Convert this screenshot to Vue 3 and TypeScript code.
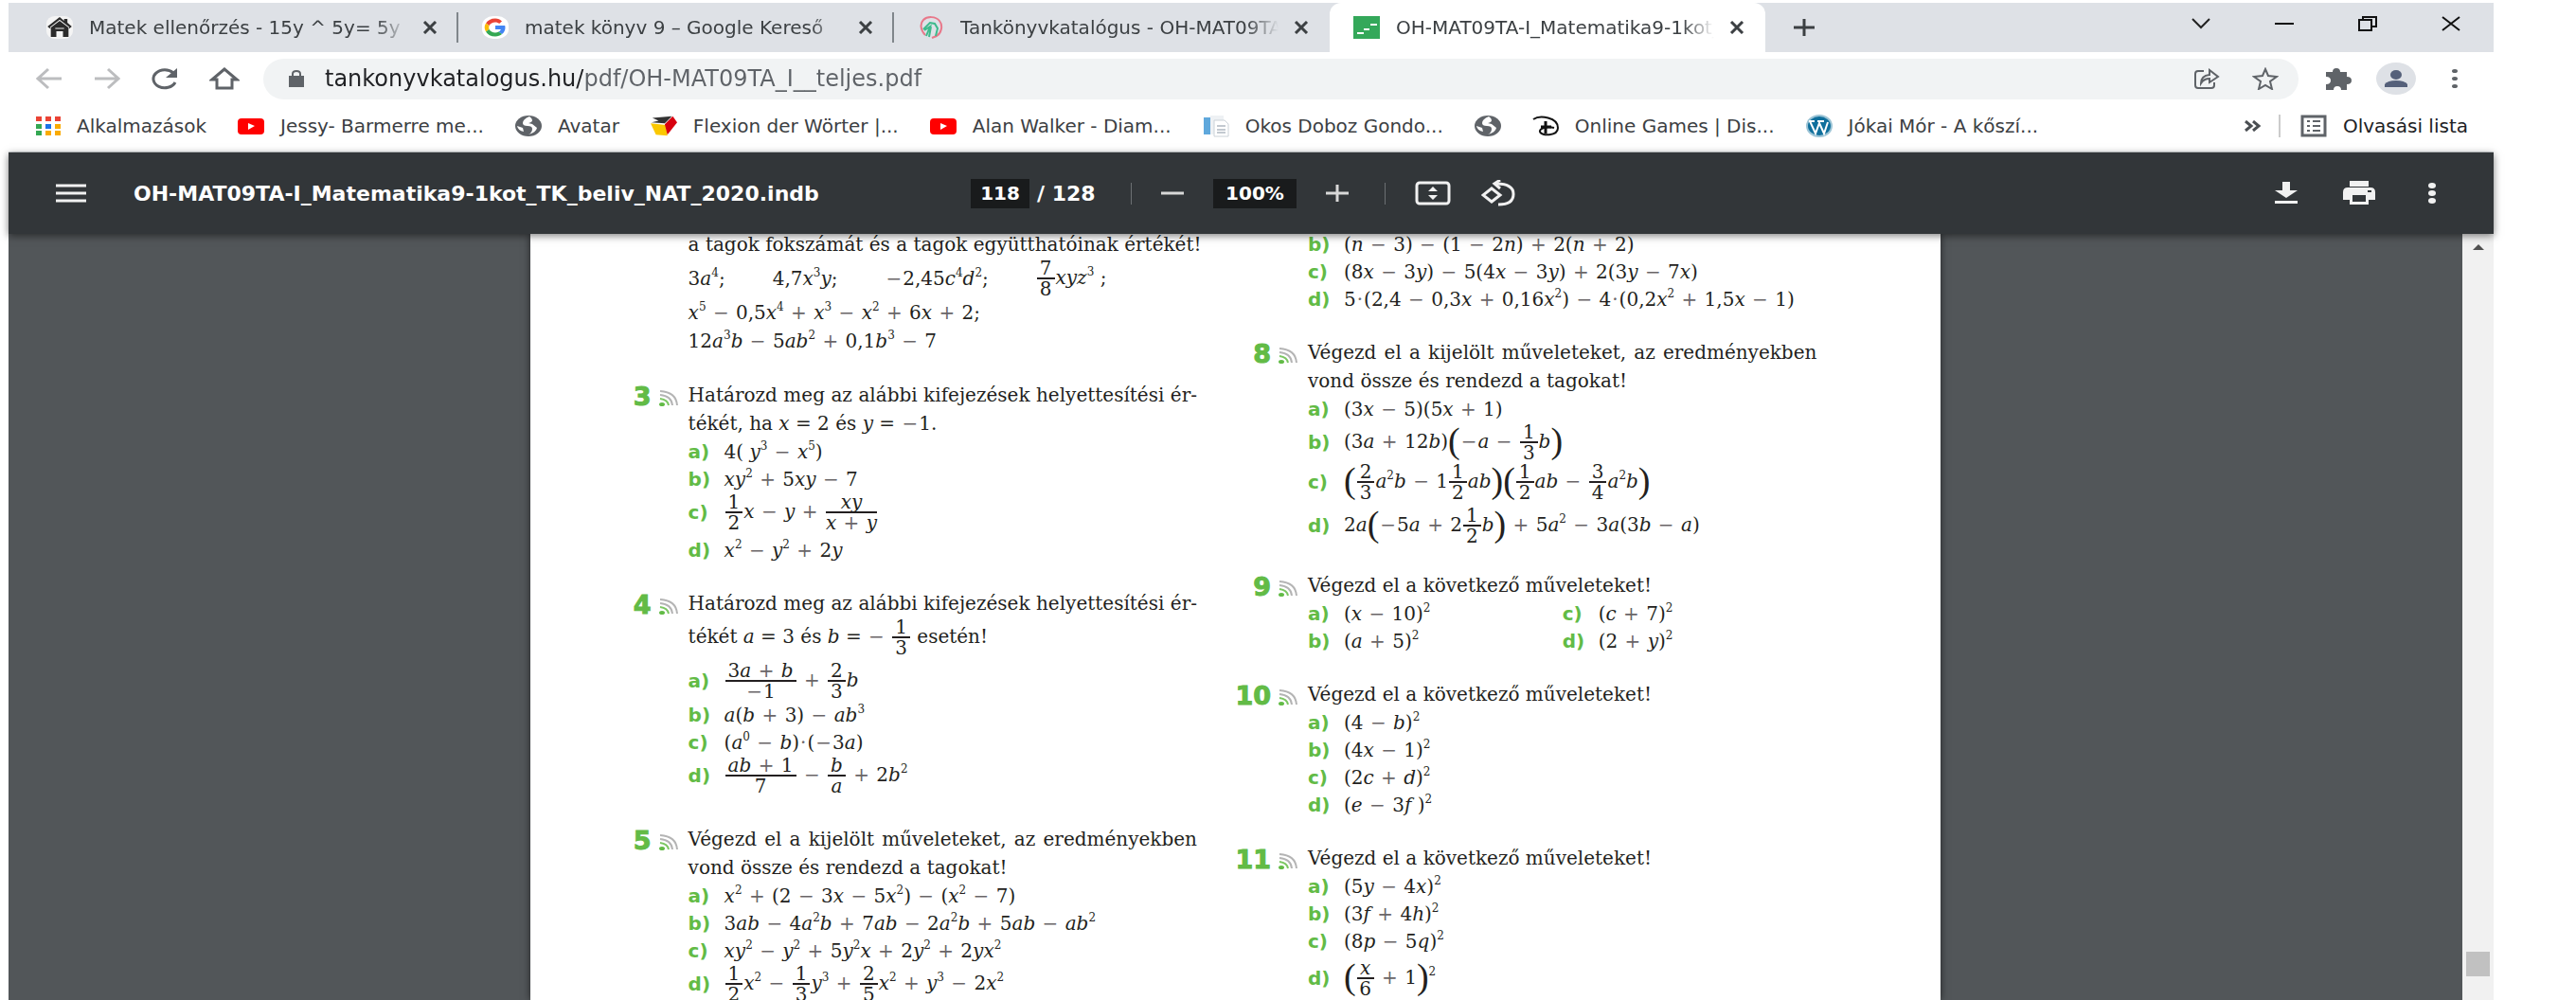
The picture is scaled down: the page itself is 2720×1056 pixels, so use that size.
<script setup lang="ts">
import { h, ref, type VNode } from 'vue'

interface Tab { icon: string; title: string; active?: boolean }
interface Bookmark { icon: string; title: string }
interface Item { label: string; math: string }
interface Row {
  text?: string
  items?: Item[]
  parts?: string[]
  justify?: boolean
  tall?: boolean
  spaced?: boolean
}
interface Exercise { no: string; rows: Row[]; spaced?: boolean }

const tabs: Tab[] = [
  { icon: 'house', title: 'Matek ellenőrzés - 15y ^ 5y= 5y (' },
  { icon: 'google', title: 'matek könyv 9 – Google Kereső' },
  { icon: 'catalog', title: 'Tankönyvkatalógus - OH-MAT09TA' },
  { icon: 'sheet', title: 'OH-MAT09TA-I_Matematika9-1kot_TK', active: true },
]

const bookmarks: Bookmark[] = [
  { icon: 'apps', title: 'Alkalmazások' },
  { icon: 'youtube', title: 'Jessy- Barmerre me...' },
  { icon: 'globe', title: 'Avatar' },
  { icon: 'flexion', title: 'Flexion der Wörter |...' },
  { icon: 'youtube', title: 'Alan Walker - Diam...' },
  { icon: 'document', title: 'Okos Doboz Gondo...' },
  { icon: 'globe', title: '' },
  { icon: 'disney', title: 'Online Games | Dis...' },
  { icon: 'wordpress', title: 'Jókai Mór - A kőszí...' },
]

const url = ref('tankonyvkatalogus.hu/pdf/OH-MAT09TA_I__teljes.pdf')
const pageNo = ref('118')
const zoom = ref('100%')

const one = (label: string, math: string, extra: Partial<Row> = {}): Row => ({
  items: [{ label, math }],
  ...extra,
})

const left: Exercise[] = [
  {
    no: '',
    rows: [
      { text: 'a tagok fokszámát és a tagok együtthatóinak értékét!' },
      { parts: ['3a^4;', '4,7x^3y;', '−2,45c^4d^2;', '{7|8}xyz^3 ;'], tall: true },
      { text: '$x^5 − 0,5x^4 + x^3 − x^2 + 6x + 2;$' },
      { text: '$12a^3b − 5ab^2 + 0,1b^3 − 7$' },
    ],
  },
  {
    no: '3',
    rows: [
      { text: 'Határozd meg az alábbi kifejezések helyettesítési ér-', justify: true },
      { text: 'tékét, ha $x = 2$ és $y = −1.$' },
      one('a)', '4( y^3 − x^5)'),
      one('b)', 'xy^2 + 5xy − 7'),
      one('c)', '{1|2}x − y + {xy|x + y}', { tall: true }),
      one('d)', 'x^2 − y^2 + 2y', { spaced: true }),
    ],
  },
  {
    no: '4',
    rows: [
      { text: 'Határozd meg az alábbi kifejezések helyettesítési ér-', justify: true },
      { text: 'tékét $a = 3$ és $b = − {1|3}$ esetén!', tall: true },
      one('a)', '{3a + b|−1} + {2|3}b', { tall: true, spaced: true }),
      one('b)', 'a(b + 3) − ab^3'),
      one('c)', '(a^0 − b)·(−3a)'),
      one('d)', '{ab + 1|7} − {b|a} + 2b^2', { tall: true }),
    ],
  },
  {
    no: '5',
    spaced: true,
    rows: [
      { text: 'Végezd el a kijelölt műveleteket, az eredményekben', justify: true },
      { text: 'vond össze és rendezd a tagokat!' },
      one('a)', 'x^2 + (2 − 3x − 5x^2) − (x^2 − 7)'),
      one('b)', '3ab − 4a^2b + 7ab − 2a^2b + 5ab − ab^2'),
      one('c)', 'xy^2 − y^2 + 5y^2x + 2y^2 + 2yx^2'),
      one('d)', '{1|2}x^2 − {1|3}y^3 + {2|5}x^2 + y^3 − 2x^2', { tall: true }),
    ],
  },
]

const right: Exercise[] = [
  {
    no: '',
    rows: [
      one('b)', '(n − 3) − (1 − 2n) + 2(n + 2)'),
      one('c)', '(8x − 3y) − 5(4x − 3y) + 2(3y − 7x)'),
      one('d)', '5·(2,4 − 0,3x + 0,16x^2) − 4·(0,2x^2 + 1,5x − 1)'),
    ],
  },
  {
    no: '8',
    rows: [
      { text: 'Végezd el a kijelölt műveleteket, az eredményekben', justify: true },
      { text: 'vond össze és rendezd a tagokat!' },
      one('a)', '(3x − 5)(5x + 1)'),
      one('b)', '(3a + 12b)[−a − {1|3}b]', { tall: true }),
      one('c)', '[{2|3}a^2b − 1{1|2}ab][{1|2}ab − {3|4}a^2b]', { tall: true }),
      one('d)', '2a[−5a + 2{1|2}b] + 5a^2 − 3a(3b − a)', { tall: true, spaced: true }),
    ],
  },
  {
    no: '9',
    rows: [
      { text: 'Végezd el a következő műveleteket!' },
      { items: [{ label: 'a)', math: '(x − 10)^2' }, { label: 'c)', math: '(c + 7)^2' }] },
      { items: [{ label: 'b)', math: '(a + 5)^2' }, { label: 'd)', math: '(2 + y)^2' }] },
    ],
  },
  {
    no: '10',
    rows: [
      { text: 'Végezd el a következő műveleteket!' },
      one('a)', '(4 − b)^2'),
      one('b)', '(4x − 1)^2'),
      one('c)', '(2c + d)^2'),
      one('d)', '(e − 3f )^2'),
    ],
  },
  {
    no: '11',
    rows: [
      { text: 'Végezd el a következő műveleteket!' },
      one('a)', '(5y − 4x)^2'),
      one('b)', '(3f + 4h)^2'),
      one('c)', '(8p − 5q)^2'),
      one('d)', '[{x|6} + 1]^2', { tall: true, spaced: true }),
    ],
  },
]

const columns = [left, right]

/* {p|q} is a fraction, ^n an exponent, [ ] are tall brackets, letters are variables */
function parseMath(src: string): VNode[] {
  const out: VNode[] = []
  const pattern = /\{([^|]*)\|([^}]*)\}|\^(\d)|([a-z]+)|([[\]])|([−+·])|([^{^a-z[\]−+·]+)/g
  for (const m of src.matchAll(pattern)) {
    if (m[1] !== undefined) {
      out.push(h('span', { class: 'm-frac' }, [
        h('span', { class: 'm-num' }, parseMath(m[1])),
        h('span', { class: 'm-den' }, parseMath(m[2])),
      ]))
    } else if (m[3]) out.push(h('sup', { class: 'm-sup' }, m[3]))
    else if (m[4]) out.push(h('i', m[4]))
    else if (m[5]) out.push(h('span', { class: 'm-tall' }, m[5] === '[' ? '(' : ')'))
    else if (m[6]) out.push(h('span', { class: 'm-op' }, m[6]))
    else out.push(h('span', m[7]))
  }
  return out
}

const MathText = (props: { src: string }) => h('span', { class: 'm' }, parseMath(props.src))
MathText.props = ['src']

const RichText = (props: { src: string }) =>
  h('span', { class: 'm' }, props.src.split('$').flatMap((s, i) => (i % 2 ? parseMath(s) : [h('span', s)])))
RichText.props = ['src']
</script>

<template>
  <div class="browser">
    <header class="chrome">
      <div class="tabstrip">
        <div v-for="(t, i) in tabs" :key="i" class="tab" :class="{ active: t.active, before: tabs[i + 1]?.active }">
          <svg v-if="t.icon === 'house'" class="fav" viewBox="0 0 24 24" preserveAspectRatio="none">
            <rect width="24" height="24" rx="8" fill="#f4f4f4" />
            <path d="M12 1 1 11l2 2 1-1v10h5v-6h6v6h5V12l1 1 2-2-4-4V3h-3v2z" fill="#2b2b2b" />
            <path d="M3.500 12 12 4.500 20.500 12M8 13h8" stroke="#f4f4f4" fill="none" />
          </svg>
          <svg v-else-if="t.icon === 'google'" class="fav" viewBox="0 0 48 48" preserveAspectRatio="none">
            <rect width="48" height="48" rx="20" fill="#fff" />
            <path fill="#EA4335" d="M24 13c3 0 5 1 7 3l5-5C33 7 29 5 24 5 16 5 10 9 7 15l6 5c2-4 6-7 11-7z" />
            <path fill="#4285F4" d="M42 24l-.5-4H24v8h10c-.5 2-2 4-4 5l6 5c4-3 6-8 6-14z" />
            <path fill="#FBBC05" d="M13 28a11 11 0 0 1 0-8l-6-5a19 19 0 0 0 0 18z" />
            <path fill="#34A853" d="M24 43c5 0 9-2 12-5l-6-5c-2 1-4 2-6 2-5 0-9-3-11-7l-6 5c3 6 9 10 17 10z" />
          </svg>
          <svg v-else-if="t.icon === 'catalog'" class="fav" viewBox="0 0 28 24" preserveAspectRatio="none" fill="none">
            <path d="M8 20C3 15 2 8 6 4s13-4 17 1 2 13-3 16l-5 2" stroke="#e8788a" stroke-width="2" />
            <path d="M6 14l7-7 5 1 3 5-2 8M7 15l6-4-4 10M14 11l-2 11" stroke="#3dba8c" stroke-width="2" />
          </svg>
          <svg v-else class="fav" viewBox="0 0 28 24" preserveAspectRatio="none">
            <rect width="28" height="24" fill="#34a85a" />
            <path d="M4 18h7M11 14h6M18 9h7" stroke="#fff" stroke-width="2" />
          </svg>
          <span class="tab-title">{{ t.title }}</span>
          <button class="close" aria-label="Bezárás">
            <svg viewBox="0 0 16 14" width="16" height="14"><path d="M2 1l12 12M14 1 2 13" stroke="#3c4043" stroke-width="3" /></svg>
          </button>
        </div>
        <button class="new-tab" aria-label="Új lap">
          <svg viewBox="0 0 22 18" width="22" height="18"><path d="M11 0v18M0 9h22" stroke="#3c4043" stroke-width="3" /></svg>
        </button>
        <div class="window-buttons">
          <button aria-label="Lapok keresése"><svg viewBox="0 0 20 16" width="20" height="16"><path d="M1 3l9 9 9-9" stroke="#222" stroke-width="2" fill="none" /></svg></button>
          <button aria-label="Kis méret"><svg viewBox="0 0 20 16" width="20" height="16"><path d="M0 8h20" stroke="#111" stroke-width="2" /></svg></button>
          <button aria-label="Előző méret"><svg viewBox="0 0 20 16" width="20" height="16"><path d="M1 4h13v11H1zM5 4V1h14v10h-5" stroke="#111" stroke-width="2" fill="none" /></svg></button>
          <button aria-label="Ablak bezárása"><svg viewBox="0 0 20 16" width="20" height="16"><path d="M1 1l18 14M19 1 1 15" stroke="#111" stroke-width="2" /></svg></button>
        </div>
      </div>

      <div class="navbar">
        <div class="nav-buttons">
          <button aria-label="Vissza"><svg viewBox="0 0 28 24" width="28" height="24"><path d="M27 12H3M13 2 2 12l11 10" stroke="#bcbdbf" stroke-width="3" fill="none" /></svg></button>
          <button aria-label="Előre"><svg viewBox="0 0 28 24" width="28" height="24"><path d="M1 12h24M15 2l11 10-11 10" stroke="#bcbdbf" stroke-width="3" fill="none" /></svg></button>
          <button aria-label="Újratöltés"><svg viewBox="0 0 28 24" width="28" height="24"><path d="M25 16A12 9.500 0 1 1 23 6" stroke="#5f6368" stroke-width="3" fill="none" /><path d="M27 1v10H15z" fill="#5f6368" /></svg></button>
          <button aria-label="Kezdőlap"><svg viewBox="0 0 32 24" width="32" height="24"><path d="M16 2 3 13h5v9h16v-9h5z" stroke="#5f6368" stroke-width="3" fill="none" /></svg></button>
        </div>
        <div class="omnibox">
          <svg viewBox="0 0 16 18" width="16" height="18"><path d="M0 6h16v12H0z" fill="#5f6368" /><path d="M4 7V4q0-3 4-3t4 3v3" stroke="#5f6368" stroke-width="2" fill="none" /></svg>
          <input v-model="url" class="url" aria-label="Cím" />
          <button aria-label="Megosztás">
            <svg viewBox="0 0 28 22" width="28" height="22" fill="none" stroke="#5f6368" stroke-width="2"><path d="M11 3H5Q2 3 2 6v12q0 3 3 3h14q3 0 3-3v-3" /><path d="M8 16q0-8 9-9V2l9 7-9 6v-4q-6 0-9 5z" /></svg>
          </button>
          <button aria-label="Könyvjelző">
            <svg viewBox="0 0 28 24" width="28" height="24"><path d="M14 2l3 7 9 1-7 5 2 8-7-4-7 4 2-8-7-5 9-1z" stroke="#5f6368" stroke-width="2" fill="none" /></svg>
          </button>
        </div>
        <button aria-label="Bővítmények"><svg viewBox="0 0 28 24" width="28" height="24"><path d="M1 5h7q0-4 4-4t4 4h7v5q5 0 5 4t-5 4v6h-6q0-4-4-4t-4 4H1v-6q5 0 5-4t-5-4z" fill="#5f6368" /></svg></button>
        <button class="avatar" aria-label="Profil"><svg viewBox="0 0 24 18" width="24" height="18" fill="#55607a"><ellipse cx="12" cy="5" rx="6" ry="5" /><path d="M0 18v-3q3-4 12-4t12 4v3z" /></svg></button>
        <button aria-label="Menü"><svg viewBox="0 0 6 22" width="6" height="22" fill="#5f6368"><ellipse cx="3" cy="3" rx="3" ry="2" /><ellipse cx="3" cy="11" rx="3" ry="2" /><ellipse cx="3" cy="19" rx="3" ry="2" /></svg></button>
      </div>

      <nav class="bookmarks">
        <a v-for="(b, i) in bookmarks" :key="i" href="#" class="bookmark">
          <svg v-if="b.icon === 'apps'" class="bm-small" viewBox="0 0 26 20">
            <path d="M0 0h6v5H0zM10 0h6v5h-6zM20 0h6v5h-6z" fill="#ea4335" />
            <path d="M0 8h6v5H0z" fill="#34a853" /><path d="M10 8h6v5h-6z" fill="#1a73e8" /><path d="M20 8h6v5h-6z" fill="#f9ab00" />
            <path d="M0 15h6v5H0z" fill="#34a853" /><path d="M10 15h6v5h-6zM20 15h6v5h-6z" fill="#f9ab00" />
          </svg>
          <svg v-else-if="b.icon === 'youtube'" class="bm" viewBox="0 0 28 24">
            <rect y="4" width="28" height="17" rx="4" fill="#f00" /><path d="M11 9l7 3-7 4z" fill="#fff" />
          </svg>
          <svg v-else-if="b.icon === 'globe'" class="bm" viewBox="0 0 28 24">
            <ellipse cx="14" cy="12" rx="14" ry="11" fill="#5f6368" />
            <path d="M15 2q-7 3-7 7 0 3 5 3 5 0 5 3 0 4-4 6 8-2 9-7l-5-4-4-1q4-1 4-3 0-2-3-4zM2 12l6 2 1 4q-6-1-7-6z" fill="#fff" />
          </svg>
          <svg v-else-if="b.icon === 'flexion'" class="bm" viewBox="0 0 30 24">
            <path d="M2 3 24 1l-8 8L1 8l8-2z" fill="#333" /><path d="M0 9l17 2 2 12-13-1z" fill="#fbc800" /><path d="M25 1l5 7-11 14-3-12z" fill="#d8000f" />
          </svg>
          <svg v-else-if="b.icon === 'document'" class="bm" viewBox="0 0 28 24">
            <path d="M8 1h14v20H8z" fill="#eef1f4" /><path d="M1 3h7v18H1z" fill="#5fa8dc" />
            <path d="M12 6h11l4 4v13H12z" fill="#fff" stroke="#ccd2d8" /><path d="M15 12h9M15 16h9M15 19h9" stroke="#c3c9d0" stroke-width="2" />
          </svg>
          <svg v-else-if="b.icon === 'disney'" class="bm" viewBox="0 0 28 24" fill="none" stroke="#111">
            <path d="M1 5C8 0 27 3 27 14c0 9-18 9-19 4-1-4 9-6 15-4" stroke-width="2" /><path d="M14 7v13M9 13h11" stroke-width="3" />
          </svg>
          <svg v-else class="bm" viewBox="0 0 28 24">
            <ellipse cx="14" cy="12" rx="14" ry="12" fill="#9cc4d6" /><ellipse cx="14" cy="12" rx="12" ry="10" fill="#0f6f9c" />
            <path d="M4 7l6 13 4-11 5 11 4-12M3 7h6M12 7h7" stroke="#fff" stroke-width="2" fill="none" />
          </svg>
          <span v-if="b.title">{{ b.title }}</span>
        </a>
        <button class="more" aria-label="További könyvjelzők"><svg viewBox="0 0 18 12" width="18" height="12"><path d="M1 1l6 5-6 5M9 1l6 5-6 5" stroke="#4a4e52" stroke-width="3" fill="none" /></svg></button>
        <button class="reading">
          <svg class="bm" viewBox="0 0 28 24"><path d="M2 2h24v20H2z" stroke="#5f6368" stroke-width="3" fill="none" /><path d="M7 7h3M7 12h3M7 17h3M13 7h8M13 12h8M13 17h8" stroke="#5f6368" stroke-width="2" /></svg>
          Olvasási lista
        </button>
      </nav>
    </header>

    <div class="pdfbar">
      <div class="pdf-start">
        <button aria-label="Oldalsáv"><svg viewBox="0 0 32 20" width="32" height="20"><path d="M0 2h32M0 10h32M0 18h32" stroke="#f1f1f1" stroke-width="3" /></svg></button>
        <span class="pdf-title">OH-MAT09TA-I_Matematika9-1kot_TK_beliv_NAT_2020.indb</span>
      </div>
      <div class="pdf-center">
        <input v-model="pageNo" class="page-no" aria-label="Oldalszám" />
        <span class="page-total">/ 128</span>
        <span class="rule" />
        <button aria-label="Kicsinyítés"><svg viewBox="0 0 24 18" width="24" height="18"><path d="M0 9h24" stroke="#d8d8d8" stroke-width="3" /></svg></button>
        <input v-model="zoom" class="zoom" aria-label="Nagyítás" />
        <button aria-label="Nagyítás növelése"><svg viewBox="0 0 24 18" width="24" height="18"><path d="M12 0v18M0 9h24" stroke="#d8d8d8" stroke-width="3" /></svg></button>
        <span class="rule" />
        <button class="fit" aria-label="Oldalhoz igazítás">
          <svg viewBox="0 0 38 26" width="38" height="26"><rect x="2" y="2" width="34" height="22" rx="3" stroke="#f1f1f1" stroke-width="3" fill="none" /><path d="M19 6l5 5H14zM19 20l5-5H14z" fill="#f1f1f1" /></svg>
        </button>
        <button aria-label="Forgatás">
          <svg viewBox="0 0 36 28" width="36" height="28" fill="none" stroke="#f1f1f1" stroke-width="3"><path d="M11 9l9 7-9 7-9-7z" /><path d="M16 4q18 0 18 11T18 26" /><path d="M20 0l-6 4 6 5" /></svg>
        </button>
      </div>
      <div class="pdf-end">
        <button aria-label="Letöltés"><svg viewBox="0 0 24 24" width="24" height="24" fill="#f1f1f1"><path d="M8 0h8v9h8L12 17 0 9h8zM0 20h24v3H0z" /></svg></button>
        <button aria-label="Nyomtatás"><svg viewBox="0 0 34 26" width="34" height="26"><path d="M7 0h20v6H7zM5 7h24q5 0 5 5v8h-7v5H7v-5H0v-8q0-5 5-5z" fill="#f1f1f1" /><path d="M10 15h14v7H10z" fill="#323639" /><path d="M26 10h4v2h-4z" fill="#323639" /></svg></button>
        <button aria-label="További műveletek"><svg viewBox="0 0 8 22" width="8" height="22" fill="#f1f1f1"><ellipse cx="4" cy="3" rx="4" ry="3" /><ellipse cx="4" cy="11" rx="4" ry="3" /><ellipse cx="4" cy="19" rx="4" ry="3" /></svg></button>
      </div>
    </div>

    <main class="viewer">
      <div class="canvas">
        <article class="sheet">
          <section v-for="(col, c) in columns" :key="c" class="column">
            <div v-for="(ex, e) in col" :key="e" class="exercise" :class="{ spaced: ex.spaced }">
              <div class="number">{{ ex.no }}</div>
              <svg class="signal" viewBox="0 0 20 18" fill="none">
                <template v-if="ex.no">
                  <path d="M1 2q17 1 18 15M1 6q12 1 13 11" stroke="#b4b4b4" stroke-width="2" />
                  <path d="M1 10q8 1 9 7" stroke="#7cc763" stroke-width="2" /><ellipse cx="3" cy="16" rx="3" ry="2" fill="#62bb46" />
                </template>
              </svg>
              <div class="body">
                <div v-for="(r, i) in ex.rows" :key="i" class="row" :class="{ tall: r.tall, spaced: r.spaced, prose: r.text, justify: r.justify }">
                  <template v-if="r.items">
                    <div v-for="it in r.items" :key="it.label" class="item">
                      <b class="label">{{ it.label }}</b><MathText :src="it.math" />
                    </div>
                  </template>
                  <div v-else-if="r.parts" class="parts">
                    <MathText v-for="p in r.parts" :key="p" :src="p" />
                  </div>
                  <RichText v-else :src="r.text ?? ''" />
                </div>
              </div>
            </div>
          </section>
        </article>
      </div>
      <div class="scrollbar">
        <svg viewBox="0 0 12 6" width="12" height="6"><path d="M6 0l6 6H0z" fill="#505050" /></svg>
        <div class="thumb" />
      </div>
    </main>
  </div>
</template>

<style>
html, body { background: #fff; overflow: hidden; }

.m { white-space: pre; }
.m i { font-style: italic; }
.m-op { color: #6a6668; margin: 0 1px; }
.m-sup { font-size: 12px; line-height: 0; vertical-align: 9px; }
.m-frac {
  display: inline-flex;
  flex-direction: column;
  align-items: center;
  vertical-align: middle;
  line-height: 20px;
  margin: 0 1px;
}
.m-num { border-bottom: 2px solid #231f20; padding: 0 3px; min-width: 12px; text-align: center; }
.m-frac > span { align-self: stretch; text-align: center; }
.m-tall { font-family: "Liberation Serif", serif; font-size: 38px; line-height: 0; vertical-align: -5px; }
</style>

<style scoped>
.browser {
  box-sizing: border-box;
  height: 100vh;
  padding: 3px 87px 0 9px;
  display: flex;
  flex-direction: column;
  overflow: hidden;
  font-family: "DejaVu Sans", sans-serif;
  font-size: 20px;
  color: #3c4043;
}
button {
  border: 0;
  padding: 0;
  background: none;
  color: inherit;
  font: inherit;
  display: flex;
  align-items: center;
  flex: none;
}
svg { display: block; flex: none; }

.tabstrip { display: flex; align-items: stretch; height: 52px; padding-left: 15px; background: #dee1e6; }
.tab {
  box-sizing: border-box;
  flex: 0 1 460px;
  min-width: 0;
  display: flex;
  align-items: center;
  padding: 0 22px 0 25px;
  background: linear-gradient(#80868b, #80868b) right center / 2px 32px no-repeat;
}
.tab.before { background: none; }
.tab.active { background: #fff; border-radius: 12px 12px 0 0; }
.fav { width: 28px; height: 24px; margin-right: 17px; }
.tab-title {
  flex: 1;
  min-width: 0;
  overflow: hidden;
  white-space: nowrap;
  margin-right: 16px;
  mask-image: linear-gradient(90deg, #000 90%, transparent);
}
.new-tab { margin-left: 30px; }
.window-buttons { margin-left: auto; display: flex; gap: 68px; padding: 0 35px 8px 0; align-items: center; }

.navbar { display: flex; align-items: center; height: 56px; padding: 0 38px 0 29px; }
.nav-buttons { display: flex; gap: 33px; margin-right: 25px; }
.omnibox {
  flex: 1;
  display: flex;
  align-items: center;
  gap: 34px;
  height: 43px;
  padding: 0 21px 0 27px;
  margin-right: 28px;
  border-radius: 22px;
  background: #f1f3f4;
}
.url {
  flex: 1;
  min-width: 0;
  border: 0;
  padding: 0;
  margin-left: -12px;
  font: 24px "DejaVu Sans", sans-serif;
  color: transparent;
  background: linear-gradient(90deg, #202124 273px, #5f6368 273px);
  background-clip: text;
}
.avatar { width: 42px; height: 34px; margin: 0 38px 0 26px; border-radius: 50%; background: #dee1e6; justify-content: center; }

.bookmarks { display: flex; align-items: center; gap: 33px; height: 44px; padding: 0 27px 5px 29px; border-bottom: 1px solid #d0d3d6; }
.bookmark { display: flex; align-items: center; gap: 17px; color: inherit; text-decoration: none; white-space: nowrap; }
.bm { width: 28px; height: 24px; }
.bm-small { width: 26px; height: 20px; }
.more { margin-left: auto; margin-right: -15px; }
.reading { gap: 17px; border-left: 2px solid #ccc; padding-left: 21px; height: 24px; white-space: nowrap; color: #202124; }

.pdfbar {
  position: relative;
  z-index: 1;
  flex: none;
  display: grid;
  grid-template-columns: 1fr auto 1fr;
  align-items: center;
  height: 86px;
  background: #323639;
  color: #fff;
  font-size: 22px;
  font-weight: bold;
  box-shadow: 0 2px 8px rgba(0, 0, 0, 0.5);
}
.pdf-start { display: flex; align-items: center; gap: 50px; padding-left: 50px; }
.pdf-center { display: flex; align-items: center; padding-right: 17px; }
.pdf-center input {
  box-sizing: border-box;
  border: 0;
  padding: 0;
  height: 31px;
  background: #191b1c;
  color: #fff;
  font: inherit;
  font-size: 20px;
  text-align: center;
}
.page-no { width: 62px; margin-right: 8px; }
.page-total { width: 61px; white-space: nowrap; }
.zoom { width: 88px; margin: 0 31px; }
.rule { width: 1px; height: 23px; background: #6c7073; margin: 0 31px 0 38px; }
.rule + .fit { margin-right: 32px; }
.pdf-end { display: flex; align-items: center; justify-content: flex-end; gap: 48px; padding-right: 61px; }
.pdf-end button:last-child { margin-left: 8px; }

.viewer { flex: 1; min-height: 0; display: flex; }
.canvas { flex: 1; background: #525659; display: flex; justify-content: center; overflow: hidden; }
.sheet {
  box-sizing: border-box;
  width: 57.5%;
  display: grid;
  grid-template-columns: 1fr 1fr;
  align-items: start;
  gap: 14px;
  padding: 0 131px 0 64px;
  background: #fff;
  box-shadow: 0 0 8px rgba(0, 0, 0, 0.6);
  color: #231f20;
  font-family: "DejaVu Serif", serif;
  font-size: 20px;
}
.column { display: flex; flex-direction: column; gap: 27px; margin-top: -4px; }
.exercise { display: grid; grid-template-columns: 64px 20px 1fr; column-gap: 8px; }
.exercise.spaced { margin-top: 4px; }
.number {
  text-align: right;
  font: bold 27px/34px "DejaVu Sans", sans-serif;
  color: #62bb46;
  -webkit-text-stroke: 1px #62bb46;
}
.signal { width: 20px; height: 18px; margin-top: 9px; }
.body { padding-left: 3px; min-width: 0; }
.row { display: flex; align-items: center; height: 29px; }
.row.prose { height: 30px; }
.row.tall { height: 42px; }
.row.spaced { margin-top: 4px; }
.row.justify { display: block; line-height: 30px; text-align-last: justify; }
.row.justify > .m { white-space: normal; }
.item { flex: 1; display: flex; align-items: center; }
.label { width: 38px; font: bold 20px "DejaVu Sans", sans-serif; color: #62bb46; }
.parts { display: flex; align-items: center; gap: 50px; }

.scrollbar {
  width: 33px;
  background: #f1f1f1;
  display: flex;
  flex-direction: column;
  align-items: center;
  padding-top: 11px;
}
.thumb { width: 25px; height: 26px; margin-top: auto; margin-bottom: 25px; background: #c1c1c1; }
</style>
